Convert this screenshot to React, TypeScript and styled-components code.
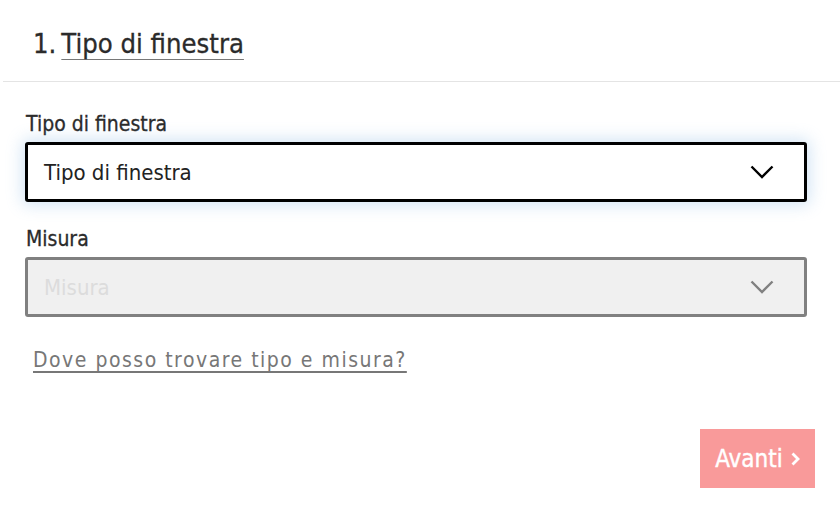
import React, { FC } from 'react';
import styled, { createGlobalStyle } from 'styled-components';

const GlobalStyle = createGlobalStyle`
  html, body {
    margin: 0;
    padding: 0;
    background: #fff;
  }
  body {
    font-family: 'DejaVu Sans Condensed', 'DejaVu Sans', sans-serif;
    color: #333;
  }
`;

const Page = styled.div`
  width: 840px;
  height: 511px;
  overflow: hidden;
  display: flex;
  flex-direction: column;
`;

const Header = styled.div`
  margin-left: 3px;
  height: 81px;
  border-bottom: 1px solid #e4e4e4;
  padding-left: 30px;
  display: flex;
  align-items: flex-start;
`;

const Title = styled.h2`
  margin: 27px 0 0;
  font-size: 27.2px;
  font-weight: normal;
  line-height: 34px;
  color: #2b2b2b;
  -webkit-text-stroke: 0.3px #2b2b2b;
`;

const Step = styled.span`
  margin-right: 5px;
`;

const TitleText = styled.span`
  text-decoration: underline;
  text-decoration-color: #777;
  text-decoration-thickness: 1px;
  text-underline-offset: 6px;
`;

const Form = styled.div`
  padding: 0 33px 0 25px;
  display: flex;
  flex-direction: column;
`;

const Label = styled.label<{ $top: number }>`
  display: block;
  margin-top: ${p => p.$top}px;
  margin-left: 1px;
  font-size: 21px;
  line-height: 24px;
  color: #2b2b2b;
  -webkit-text-stroke: 0.3px #2b2b2b;
`;

const SelectBox = styled.div<{ $disabled?: boolean }>`
  box-sizing: border-box;
  height: 60px;
  margin-top: 6px;
  padding: 0 30px 0 16px;
  display: flex;
  align-items: center;
  justify-content: space-between;
  border: 3px solid ${p => (p.$disabled ? '#808080' : '#000')};
  border-radius: 3px;
  background: ${p => (p.$disabled ? '#f0f0f0' : '#fff')};
  box-shadow: ${p =>
    p.$disabled ? 'none' : '0 0 16px 3px rgba(120, 175, 225, 0.32)'};
  font-size: 22px;
  color: ${p => (p.$disabled ? '#dcdcdc' : '#222')};
`;

const Chevron = styled.svg<{ $disabled?: boolean }>`
  width: 24px;
  height: 14px;
  stroke: ${p => (p.$disabled ? '#808080' : '#000')};
  fill: none;
  stroke-width: 2.4;
  flex-shrink: 0;
`;

const HelpLink = styled.a`
  margin: 31px 0 0 8px;
  align-self: flex-start;
  font-size: 21px;
  letter-spacing: 1.5px;
  color: #777;
  text-decoration: underline;
  text-underline-offset: 4px;
  cursor: pointer;
`;

const Footer = styled.div`
  display: flex;
  justify-content: flex-end;
  padding-right: 25px;
  margin-top: 57px;
`;

const NextButton = styled.button`
  width: 115px;
  height: 59px;
  border: none;
  background: #f99a9a;
  color: #fff;
  font-family: inherit;
  font-size: 24px;
  -webkit-text-stroke: 0.4px #fff;
  display: flex;
  align-items: center;
  justify-content: center;
  gap: 8px;
  cursor: pointer;

  svg {
    width: 9px;
    height: 14px;
    stroke: #fff;
    stroke-width: 2.8;
    fill: none;
  }
`;

const Select: FC<{ value: string; disabled?: boolean }> = ({ value, disabled }) => (
  <SelectBox $disabled={disabled}>
    <span>{value}</span>
    <Chevron $disabled={disabled} viewBox="0 0 24 14">
      <polyline points="1.5,1.5 12,12 22.5,1.5" />
    </Chevron>
  </SelectBox>
);

const App: FC = () => (
  <Page>
    <GlobalStyle />
    <Header>
      <Title>
        <Step>1.</Step>
        <TitleText>Tipo di finestra</TitleText>
      </Title>
    </Header>
    <Form>
      <Label $top={30}>Tipo di finestra</Label>
      <Select value="Tipo di finestra" />
      <Label $top={25}>Misura</Label>
      <Select value="Misura" disabled />
      <HelpLink>Dove posso trovare tipo e misura?</HelpLink>
    </Form>
    <Footer>
      <NextButton>
        Avanti
        <svg viewBox="0 0 9 14">
          <polyline points="1.5,1.5 7,7 1.5,12.5" />
        </svg>
      </NextButton>
    </Footer>
  </Page>
);

export default App;
